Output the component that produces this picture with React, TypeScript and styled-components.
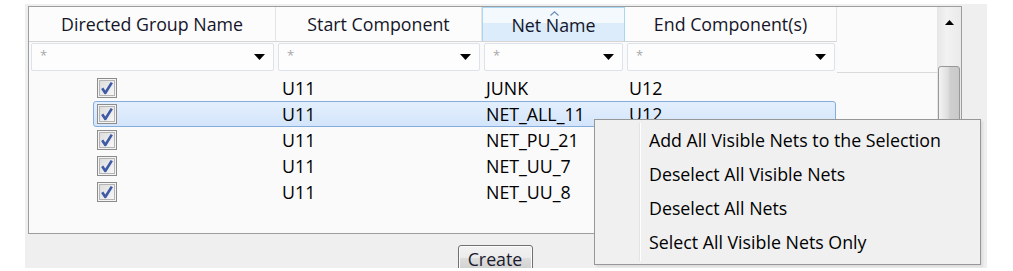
import styled, {createGlobalStyle, css} from 'styled-components';

const GlobalStyle = createGlobalStyle`
    body {
        margin: 0;
        background: #fff;
        font-family: "Open Sans", "Noto Sans", sans-serif;
        color: #111;
    }
`;

const COLS = '247px 206px 143px 212px 100px';
const FONT = '17.8px';

const Panel = styled.div`
    position: relative;
    margin: 4px 0 0 25px;
    width: 962px;
    height: 264px;
    box-sizing: border-box;
    padding: 2px 0 0 3px;
    background: #efefef;
    overflow: hidden;
`;

const Grid = styled.div`
    display: flex;
    width: 934px;
    height: 228px;
    box-sizing: border-box;
    border: 1px solid #9d9d9d;
    background: #fafafa;
`;

const Main = styled.div`
    flex: 1;
    display: flex;
    flex-direction: column;
`;

const Head = styled.div`
    display: grid;
    grid-template-columns: ${COLS};
    grid-template-rows: 35px 31px;
`;

const HeadCell = styled.div<{$sorted?: boolean}>`
    position: relative;
    display: flex;
    align-items: center;
    justify-content: center;
    box-sizing: border-box;
    border-right: 1px solid #e4e4e4;
    border-bottom: 1px solid #d5d5d5;
    background: #fcfcfc;
    font-size: ${FONT};
    color: #15152a;
    ${p => p.$sorted && css`
        border: 1px solid #a8d8f4;
        border-bottom-color: #d5d5d5;
        background: linear-gradient(#f4f9fe 0, #f4f9fe 45%, #dcecfb 45%, #dcecfb 100%);
    `}
`;

const SortArrow = styled.svg`
    position: absolute;
    top: 3px;
    left: 50%;
    margin-left: -4px;
`;

const Filler = styled.div`
    grid-row: 1 / span 2;
    grid-column: 5;
    border-bottom: 1px solid #dadada;
    background: #fbfbfb;
`;

const FilterCell = styled.div`
    padding: 1px 2px 2px 2px;
    box-sizing: border-box;
`;

const FilterBox = styled.div`
    display: flex;
    align-items: center;
    justify-content: space-between;
    height: 100%;
    box-sizing: border-box;
    padding: 0 8px 0 8px;
    border: 1px solid #dde3ea;
    border-radius: 2px;
    background: #fdfdfe;
`;

const Star = styled.span`
    font-size: 13px;
    color: #a8a8a8;
    margin-top: -4px;
`;

const Body = styled.div`
    padding-top: 2px;
`;

const Row = styled.div`
    height: 26px;
    padding-left: 64px;
`;

const RowBody = styled.div<{$selected?: boolean}>`
    display: grid;
    grid-template-columns: 182px 206px 143px 210px;
    width: 743px;
    height: 26px;
    box-sizing: border-box;
    border: 1px solid transparent;
    border-radius: 3px;
    ${p => p.$selected && css`
        border-color: #84acdd;
        background: linear-gradient(#e4effd, #d3e5fb);
    `}
`;

const CheckCell = styled.div`
    display: flex;
    align-items: center;
    padding-left: 3px;
`;

const Cell = styled.div<{$pad: number}>`
    display: flex;
    align-items: center;
    padding-left: ${p => p.$pad}px;
    font-size: ${FONT};
    color: #000;
    white-space: nowrap;
`;

const Scrollbar = styled.div`
    width: 24px;
    display: flex;
    flex-direction: column;
    align-items: center;
    background: linear-gradient(to right, #e6e6e6, #f2f2f2 40%, #eaeaea);
`;

const ScrollUp = styled.div`
    height: 30px;
    width: 100%;
    display: flex;
    align-items: center;
    justify-content: center;
`;

const Thumb = styled.div`
    margin-top: 29px;
    width: 22px;
    height: 90px;
    box-sizing: border-box;
    border: 1px solid #979797;
    border-radius: 3px;
    background: linear-gradient(to right, #f3f3f3, #dedede 45%, #cfcfcf 55%, #c9c9c9);
`;

const Footer = styled.div`
    display: flex;
    justify-content: center;
    width: 934px;
    padding-top: 11px;
`;

const Button = styled.button`
    width: 75px;
    height: 27px;
    padding: 0;
    border: 1px solid #707070;
    border-radius: 3px;
    box-shadow: inset 0 0 0 1px #fcfcfc;
    background: linear-gradient(#f2f2f2 0, #ebebeb 50%, #dddddd 50%, #cfcfcf 100%);
    font-family: "Open Sans", "Noto Sans", sans-serif;
    font-size: ${FONT};
    color: #1a1a2e;
`;

const Menu = styled.div`
    position: absolute;
    left: 569px;
    top: 115px;
    display: flex;
    width: 387px;
    height: 146px;
    box-sizing: border-box;
    padding: 3px 2px;
    border: 1px solid #979797;
    background: #f0f0f0;
    box-shadow: 2px 2px 2px rgba(0, 0, 0, .08);
`;

const Gutter = styled.div`
    width: 42px;
    border-right: 1px solid #e2e3e3;
    box-shadow: 1px 0 0 #fff;
`;

const Items = styled.div`
    flex: 1;
    display: flex;
    flex-direction: column;
`;

const Item = styled.div`
    height: 34px;
    display: flex;
    align-items: center;
    padding-left: 9px;
    font-size: ${FONT};
    color: #000;
`;

function Check() {
    return (
        <svg width="20" height="20" viewBox="0 0 20 20">
            <defs>
                <linearGradient id="cb" x1="0" y1="0" x2="1" y2="1">
                    <stop offset="0" stopColor="#dcdcdc" />
                    <stop offset="1" stopColor="#f8f8f8" />
                </linearGradient>
            </defs>
            <rect x="0.5" y="0.5" width="19" height="19" fill="#f4f4f4" stroke="#8c8c8c" />
            <rect x="2.5" y="2.5" width="15" height="15" fill="url(#cb)" stroke="#b4b4b4" />
            <path d="M5.2 10.2 L8.3 15 L14.8 4.6" fill="none" stroke="#3f5ba6" strokeWidth="2.6" strokeLinejoin="round" />
        </svg>
    );
}

function Caret() {
    return (
        <svg width="9" height="5" viewBox="0 0 9 5">
            <path d="M0 5 L4.5 0 L9 5 Z" fill="#000" />
        </svg>
    );
}

const headers = ['Directed Group Name', 'Start Component', 'Net Name', 'End Component(s)'];

const rows = [
    ['U11', 'JUNK', 'U12'],
    ['U11', 'NET_ALL_11', 'U12'],
    ['U11', 'NET_PU_21', 'U12'],
    ['U11', 'NET_UU_7', 'U12'],
    ['U11', 'NET_UU_8', 'U12'],
];

const menuItems = [
    'Add All Visible Nets to the Selection',
    'Deselect All Visible Nets',
    'Deselect All Nets',
    'Select All Visible Nets Only',
];

export default function App() {
    return (
        <>
            <GlobalStyle />
            <Panel>
                <Grid>
                    <Main>
                        <Head>
                            {headers.map(h => (
                                <HeadCell key={h} $sorted={h === 'Net Name'}>
                                    {h === 'Net Name' && (
                                        <SortArrow width="9" height="5" viewBox="0 0 9 5">
                                            <path d="M0.5 4.5 L4.5 0.8 L8.5 4.5" fill="none" stroke="#6d8fb5" strokeWidth="1.2" />
                                        </SortArrow>
                                    )}
                                    {h}
                                </HeadCell>
                            ))}
                            <Filler />
                            {headers.map(h => (
                                <FilterCell key={h}>
                                    <FilterBox>
                                        <Star>*</Star>
                                        <svg width="11" height="6" viewBox="0 0 11 6">
                                            <path d="M0 0 L11 0 L5.5 6 Z" fill="#000" />
                                        </svg>
                                    </FilterBox>
                                </FilterCell>
                            ))}
                        </Head>
                        <Body>
                            {rows.map((r, i) => (
                                <Row key={r[1]}>
                                    <RowBody $selected={i === 1}>
                                        <CheckCell><Check /></CheckCell>
                                        <Cell $pad={6}>{r[0]}</Cell>
                                        <Cell $pad={4}>{r[1]}</Cell>
                                        <Cell $pad={4}>{r[2]}</Cell>
                                    </RowBody>
                                </Row>
                            ))}
                        </Body>
                    </Main>
                    <Scrollbar>
                        <ScrollUp><Caret /></ScrollUp>
                        <Thumb />
                    </Scrollbar>
                </Grid>
                <Footer>
                    <Button>Create</Button>
                </Footer>
                <Menu>
                    <Gutter />
                    <Items>
                        {menuItems.map(m => <Item key={m}>{m}</Item>)}
                    </Items>
                </Menu>
            </Panel>
        </>
    );
}
